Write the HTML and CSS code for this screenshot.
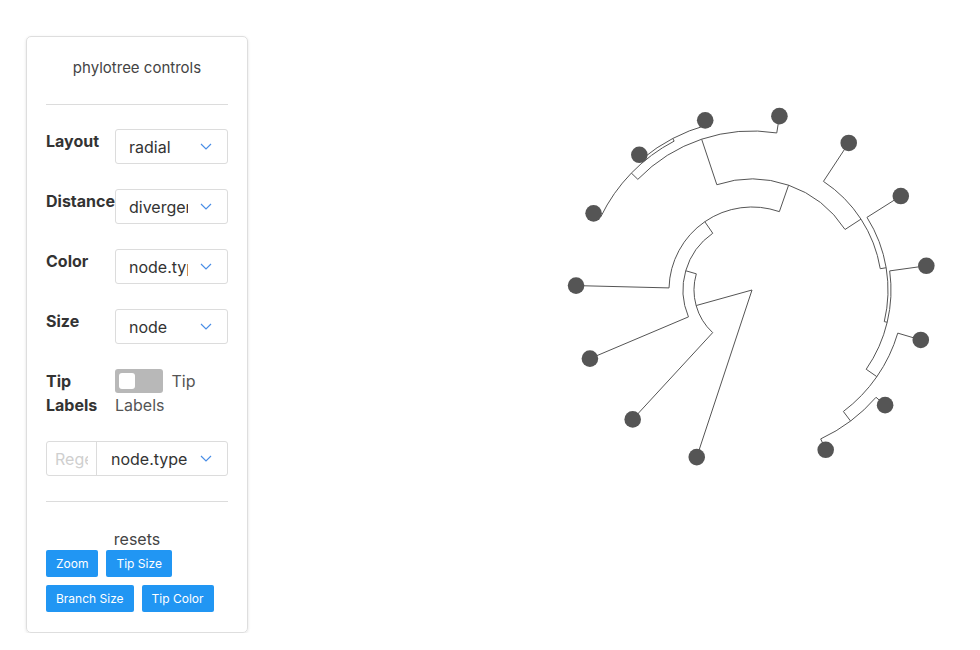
FILE: index.html
```html
<!DOCTYPE html>
<html>
<head>
<meta charset="utf-8">
<link rel="stylesheet" href="styles.css">
</head>
<body>
<div class="page">
  <div class="card">
    <div class="title">phylotree controls</div>
    <hr class="sep">
    <div class="row">
      <div class="label">Layout</div>
      <div class="select"><span class="value">radial</span><svg class="chev" width="12" height="7" viewBox="0 0 12 7"><path d="M1 1 L6 6 L11 1"/></svg></div>
    </div>
    <div class="row">
      <div class="label">Distance</div>
      <div class="select"><span class="value">divergence</span><svg class="chev" width="12" height="7" viewBox="0 0 12 7"><path d="M1 1 L6 6 L11 1"/></svg></div>
    </div>
    <div class="row">
      <div class="label">Color</div>
      <div class="select"><span class="value">node.type</span><svg class="chev" width="12" height="7" viewBox="0 0 12 7"><path d="M1 1 L6 6 L11 1"/></svg></div>
    </div>
    <div class="row">
      <div class="label">Size</div>
      <div class="select"><span class="value">node</span><svg class="chev" width="12" height="7" viewBox="0 0 12 7"><path d="M1 1 L6 6 L11 1"/></svg></div>
    </div>
    <div class="row row-tip">
      <div class="label">Tip Labels</div>
      <div class="switch-wrap"><span class="switch"><span class="knob"></span></span> Tip Labels</div>
    </div>
    <div class="group">
      <input class="regex" type="text" placeholder="Regex">
      <div class="gselect"><span class="gvalue">node.type</span><svg class="chev" width="12" height="7" viewBox="0 0 12 7"><path d="M1 1 L6 6 L11 1"/></svg></div>
    </div>
    <hr class="sep sep2">
    <div class="resets">resets</div>
    <div class="buttons">
      <span class="btn">Zoom</span>
      <span class="btn">Tip Size</span>
      <span class="btn">Branch Size</span>
      <span class="btn">Tip Color</span>
    </div>
  </div>
  <svg class="tree" id="tree" width="690" height="600" viewBox="0 0 690 600"></svg>
</div>
<script src="script.js"></script>
</body>
</html>
```

FILE: styles.css
```css
html, body {
  margin: 0;
  padding: 0;
  background: #fff;
}
body {
  font-family: Inter, "Liberation Sans", sans-serif;
  color: #333;
}
.page {
  display: flex;
  align-items: flex-start;
}
.card {
  box-sizing: border-box;
  width: 222px;
  margin: 36px 0 0 26px;
  padding: 20px 19px 20px;
  border: 1px solid #dedede;
  border-radius: 5px;
  box-shadow: 0 1px 3px rgba(0, 0, 0, 0.12);
}
.title {
  text-align: center;
  font-size: 15px;
  line-height: 22px;
  color: #444;
}
.sep {
  border: 0;
  border-top: 1px solid #dcdcdc;
  height: 0;
  margin: 25px 0 24px;
}
.sep2 {
  margin: 25px 0 27px;
}
.row {
  display: flex;
  align-items: flex-start;
  margin-bottom: 25px;
}
.row-tip {
  margin-bottom: 24px;
}
.label {
  width: 69px;
  flex: none;
  font-weight: 700;
  font-size: 16px;
  line-height: 24px;
  color: #333;
  white-space: normal;
}
.select {
  box-sizing: border-box;
  width: 113px;
  height: 35px;
  border: 1px solid #dcdcdc;
  border-radius: 3px;
  display: flex;
  align-items: center;
  padding: 0 15px 0 13px;
  font-size: 16px;
  color: #333;
}
.value {
  width: 59px;
  overflow: hidden;
  white-space: nowrap;
}
.chev {
  margin-left: auto;
  fill: none;
  stroke: #4a8ee6;
  stroke-width: 1.2;
}
.switch-wrap {
  width: 113px;
  font-size: 16px;
  line-height: 24px;
  color: #555;
}
.switch {
  display: inline-flex;
  box-sizing: border-box;
  width: 48px;
  height: 24px;
  padding: 4px;
  vertical-align: top;
  background: #b8b8b8;
  border-radius: 3px;
  margin-right: 4px;
}
.knob {
  width: 16px;
  height: 16px;
  background: #fff;
  border-radius: 3px;
}
.group {
  box-sizing: border-box;
  display: flex;
  height: 35px;
  border: 1px solid #dcdcdc;
  border-radius: 3px;
}
.regex {
  box-sizing: border-box;
  width: 50px;
  height: 33px;
  border: 0;
  border-right: 1px solid #dcdcdc;
  padding: 0 8px;
  font-family: Inter, "Liberation Sans", sans-serif;
  font-size: 16px;
  background: transparent;
  outline: none;
}
.regex::placeholder {
  color: #cfcfcf;
}
.gselect {
  flex: 1;
  display: flex;
  align-items: center;
  padding: 0 15px 0 14px;
  font-size: 16px;
  color: #333;
}
.resets {
  text-align: center;
  font-size: 16px;
  line-height: 20px;
  color: #444;
  margin-bottom: 1px;
}
.buttons {
  display: flex;
  flex-wrap: wrap;
  gap: 8px;
}
.btn {
  height: 27px;
  line-height: 27px;
  padding: 0 10px;
  background: #2196f3;
  color: #fff;
  font-size: 12px;
  border-radius: 2px;
}
.tree {
  margin-left: 32px;
  flex: none;
}
.tree .branch {
  fill: none;
  stroke: #555;
  stroke-width: 1;
}
.tree .tip {
  fill: #555;
}
```

FILE: script.js
```js
(function () {
  var NS = "http://www.w3.org/2000/svg";
  var svg = document.getElementById("tree");
  var CX = 472, CY = 290;
  var A0 = 108.3, DA = 24.38, LR = 176;

  function leaf(k) { return { leaf: true, a: A0 + k * DA, r: LR }; }
  function node(r, children) { return { r: r, children: children }; }

  var tree = node(0, [
    leaf(0),
    node(58, [leaf(1),
      node(69, [leaf(2),
        node(83, [leaf(3),
          node(111, [
            node(159, [
              node(168, [leaf(4), node(171, [leaf(5), leaf(6)])]),
              leaf(7)
            ]),
            node(130, [leaf(8),
              node(136, [leaf(9),
                node(139, [leaf(10),
                  node(152, [leaf(11),
                    node(164, [leaf(12), leaf(13)])
                  ])
                ])
              ])
            ])
          ])
        ])
      ])
    ])
  ]);

  function setAngle(n) {
    if (n.leaf) return n.a;
    var as = n.children.map(setAngle);
    n.a = (as[0] + as[as.length - 1]) / 2;
    return n.a;
  }
  setAngle(tree);

  function pt(r, a) {
    var t = a * Math.PI / 180;
    return (CX + r * Math.cos(t)).toFixed(2) + " " + (CY + r * Math.sin(t)).toFixed(2);
  }

  var d = "";
  var tips = [];
  function walk(p) {
    if (p.leaf) { tips.push(p); return; }
    p.children.forEach(function (c) {
      if (p.r === 0) {
        d += "M" + CX + " " + CY + " L" + pt(c.r, c.a) + " ";
      } else {
        var sweep = c.a > p.a ? 1 : 0;
        d += "M" + pt(p.r, p.a) + " A" + p.r + " " + p.r + " 0 0 " + sweep + " " + pt(p.r, c.a) + " L" + pt(c.r, c.a) + " ";
      }
      walk(c);
    });
  }
  walk(tree);

  var path = document.createElementNS(NS, "path");
  path.setAttribute("class", "branch");
  path.setAttribute("d", d);
  svg.appendChild(path);

  tips.forEach(function (t) {
    var c = document.createElementNS(NS, "circle");
    var rad = t.a * Math.PI / 180;
    c.setAttribute("class", "tip");
    c.setAttribute("cx", (CX + t.r * Math.cos(rad)).toFixed(2));
    c.setAttribute("cy", (CY + t.r * Math.sin(rad)).toFixed(2));
    c.setAttribute("r", "8.3");
    svg.appendChild(c);
  });
})();
```
